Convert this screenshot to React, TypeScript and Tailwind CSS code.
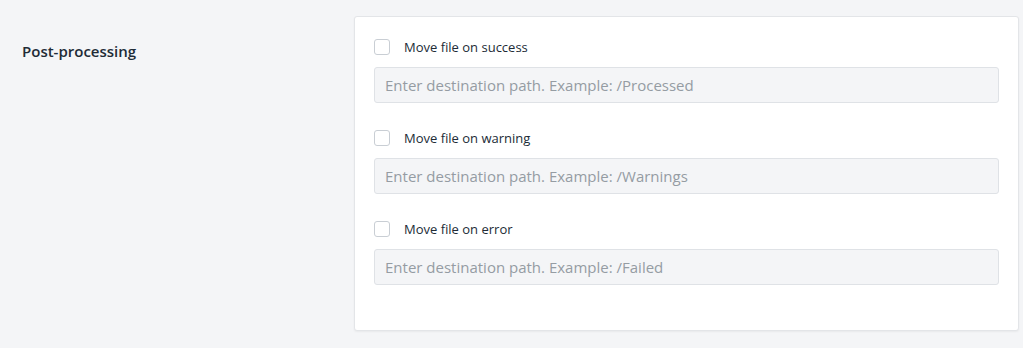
import React from "react";

const rows = [
  { label: "Move file on success", placeholder: "Enter destination path. Example: /Processed" },
  { label: "Move file on warning", placeholder: "Enter destination path. Example: /Warnings" },
  { label: "Move file on error", placeholder: "Enter destination path. Example: /Failed" },
];

const App = () => {
  return (
    <div className="min-h-[348px] bg-[#f4f5f7] font-['Open_Sans',sans-serif] text-[#212b36]">
      <div className="flex pt-4 pr-1">
        <div className="w-[354px] pl-[22px] pt-[25px]">
          <h2 className="text-[15px] font-semibold leading-5">Post-processing</h2>
        </div>
        <div className="flex-1 bg-white border border-[#e3e5e8] rounded-[3px] shadow-[0_1px_2px_rgba(0,0,0,0.05)] px-[19px] pt-5 pb-5">
          {rows.map((row) => (
            <div key={row.label} className="mb-[25px]">
              <label className="flex items-center h-5 gap-[14px] cursor-pointer">
                <span className="w-4 h-4 border border-[#c9ced4] rounded-[3px] bg-white" />
                <span className="text-[13px] leading-5">{row.label}</span>
              </label>
              <input
                type="text"
                placeholder={row.placeholder}
                className="mt-2.5 w-full h-9 px-[10px] bg-[#f4f5f7] border border-[#dfe2e6] rounded-[3px] text-[15px] outline-none placeholder:text-[#959ca3]"
              />
            </div>
          ))}
        </div>
      </div>
    </div>
  );
};

export default App;
